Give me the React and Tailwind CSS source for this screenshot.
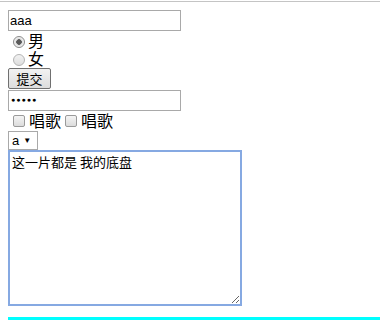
import React from "react";

const cjk = "font-['Noto_Sans_CJK_SC','Noto_Sans',sans-serif]";

const Radio = ({ checked }) => (
  <span
    className={`mt-[5px] ml-[5px] mr-[3px] h-[12px] w-[12px] shrink-0 rounded-full border ${
      checked
        ? "border-[#8a8a8a] bg-[radial-gradient(circle,#5a5a5a_0,#5a5a5a_2.5px,#dcdcdc_3px,#f4f4f4_5px)]"
        : "border-[#b4b4b4] bg-[linear-gradient(#f2f2f2,#dedede)]"
    }`}
  />
);

const Checkbox = ({ className = "" }) => (
  <span
    className={`mt-[4px] h-[12px] w-[12px] shrink-0 rounded-[2px] border border-[#9a9a9a] bg-[linear-gradient(#f4f4f4,#dcdcdc)] ${className}`}
  />
);

export default function App() {
  return (
    <div className="h-[324px] w-[380px] overflow-hidden bg-white font-['Liberation_Sans',Arial,sans-serif] text-black">
      <div className="mt-px h-px bg-[#c4c4c4]" />
      <div className="flex flex-col items-start pl-2 pt-2">
        <input
          readOnly
          defaultValue="aaa"
          className="h-[21px] w-[173px] border border-[#a9a9a9] px-px text-[13px] leading-none outline-none"
        />
        <div className={`flex h-[18px] items-start ${cjk} text-[16px] leading-[18px]`}>
          <Radio checked />
          <span>男</span>
        </div>
        <div className={`flex h-[18px] items-start ${cjk} text-[16px] leading-[18px]`}>
          <Radio />
          <span>女</span>
        </div>
        <button className={`mt-px flex h-[21px] w-[43px] items-center justify-center rounded-[2px] border border-[#707070] bg-[linear-gradient(#f2f2f2,#dddddd)] ${cjk} text-[13px]`}>
          提交
        </button>
        <div className="mt-px flex h-[21px] w-[173px] items-center border border-[#a9a9a9] pl-[2px] text-[7px] tracking-[1px]">
          ●●●●●
        </div>
        <div className={`flex h-[20px] items-start ${cjk} text-[16px] leading-[19px]`}>
          <Checkbox className="ml-[5px] mr-[4px]" />
          <span>唱歌</span>
          <Checkbox className="ml-[4px] mr-[4px]" />
          <span>唱歌</span>
        </div>
        <div className="flex h-[19px] w-[30px] items-center border border-[#a9a9a9] pl-[3px] text-[13px]">
          <span>a</span>
          <span className="ml-[4px] text-[8px]">▼</span>
        </div>
        <textarea
          readOnly
          defaultValue="这一片都是 我的底盘"
          className={`h-[156px] w-[234px] border-2 border-[#86a9e2] px-[2px] py-[2px] ${cjk} text-[13px] leading-[16px] outline-none`}
        />
        <div className="mt-[11px] h-[3px] w-[372px] bg-[#00ffff]" />
      </div>
    </div>
  );
}
